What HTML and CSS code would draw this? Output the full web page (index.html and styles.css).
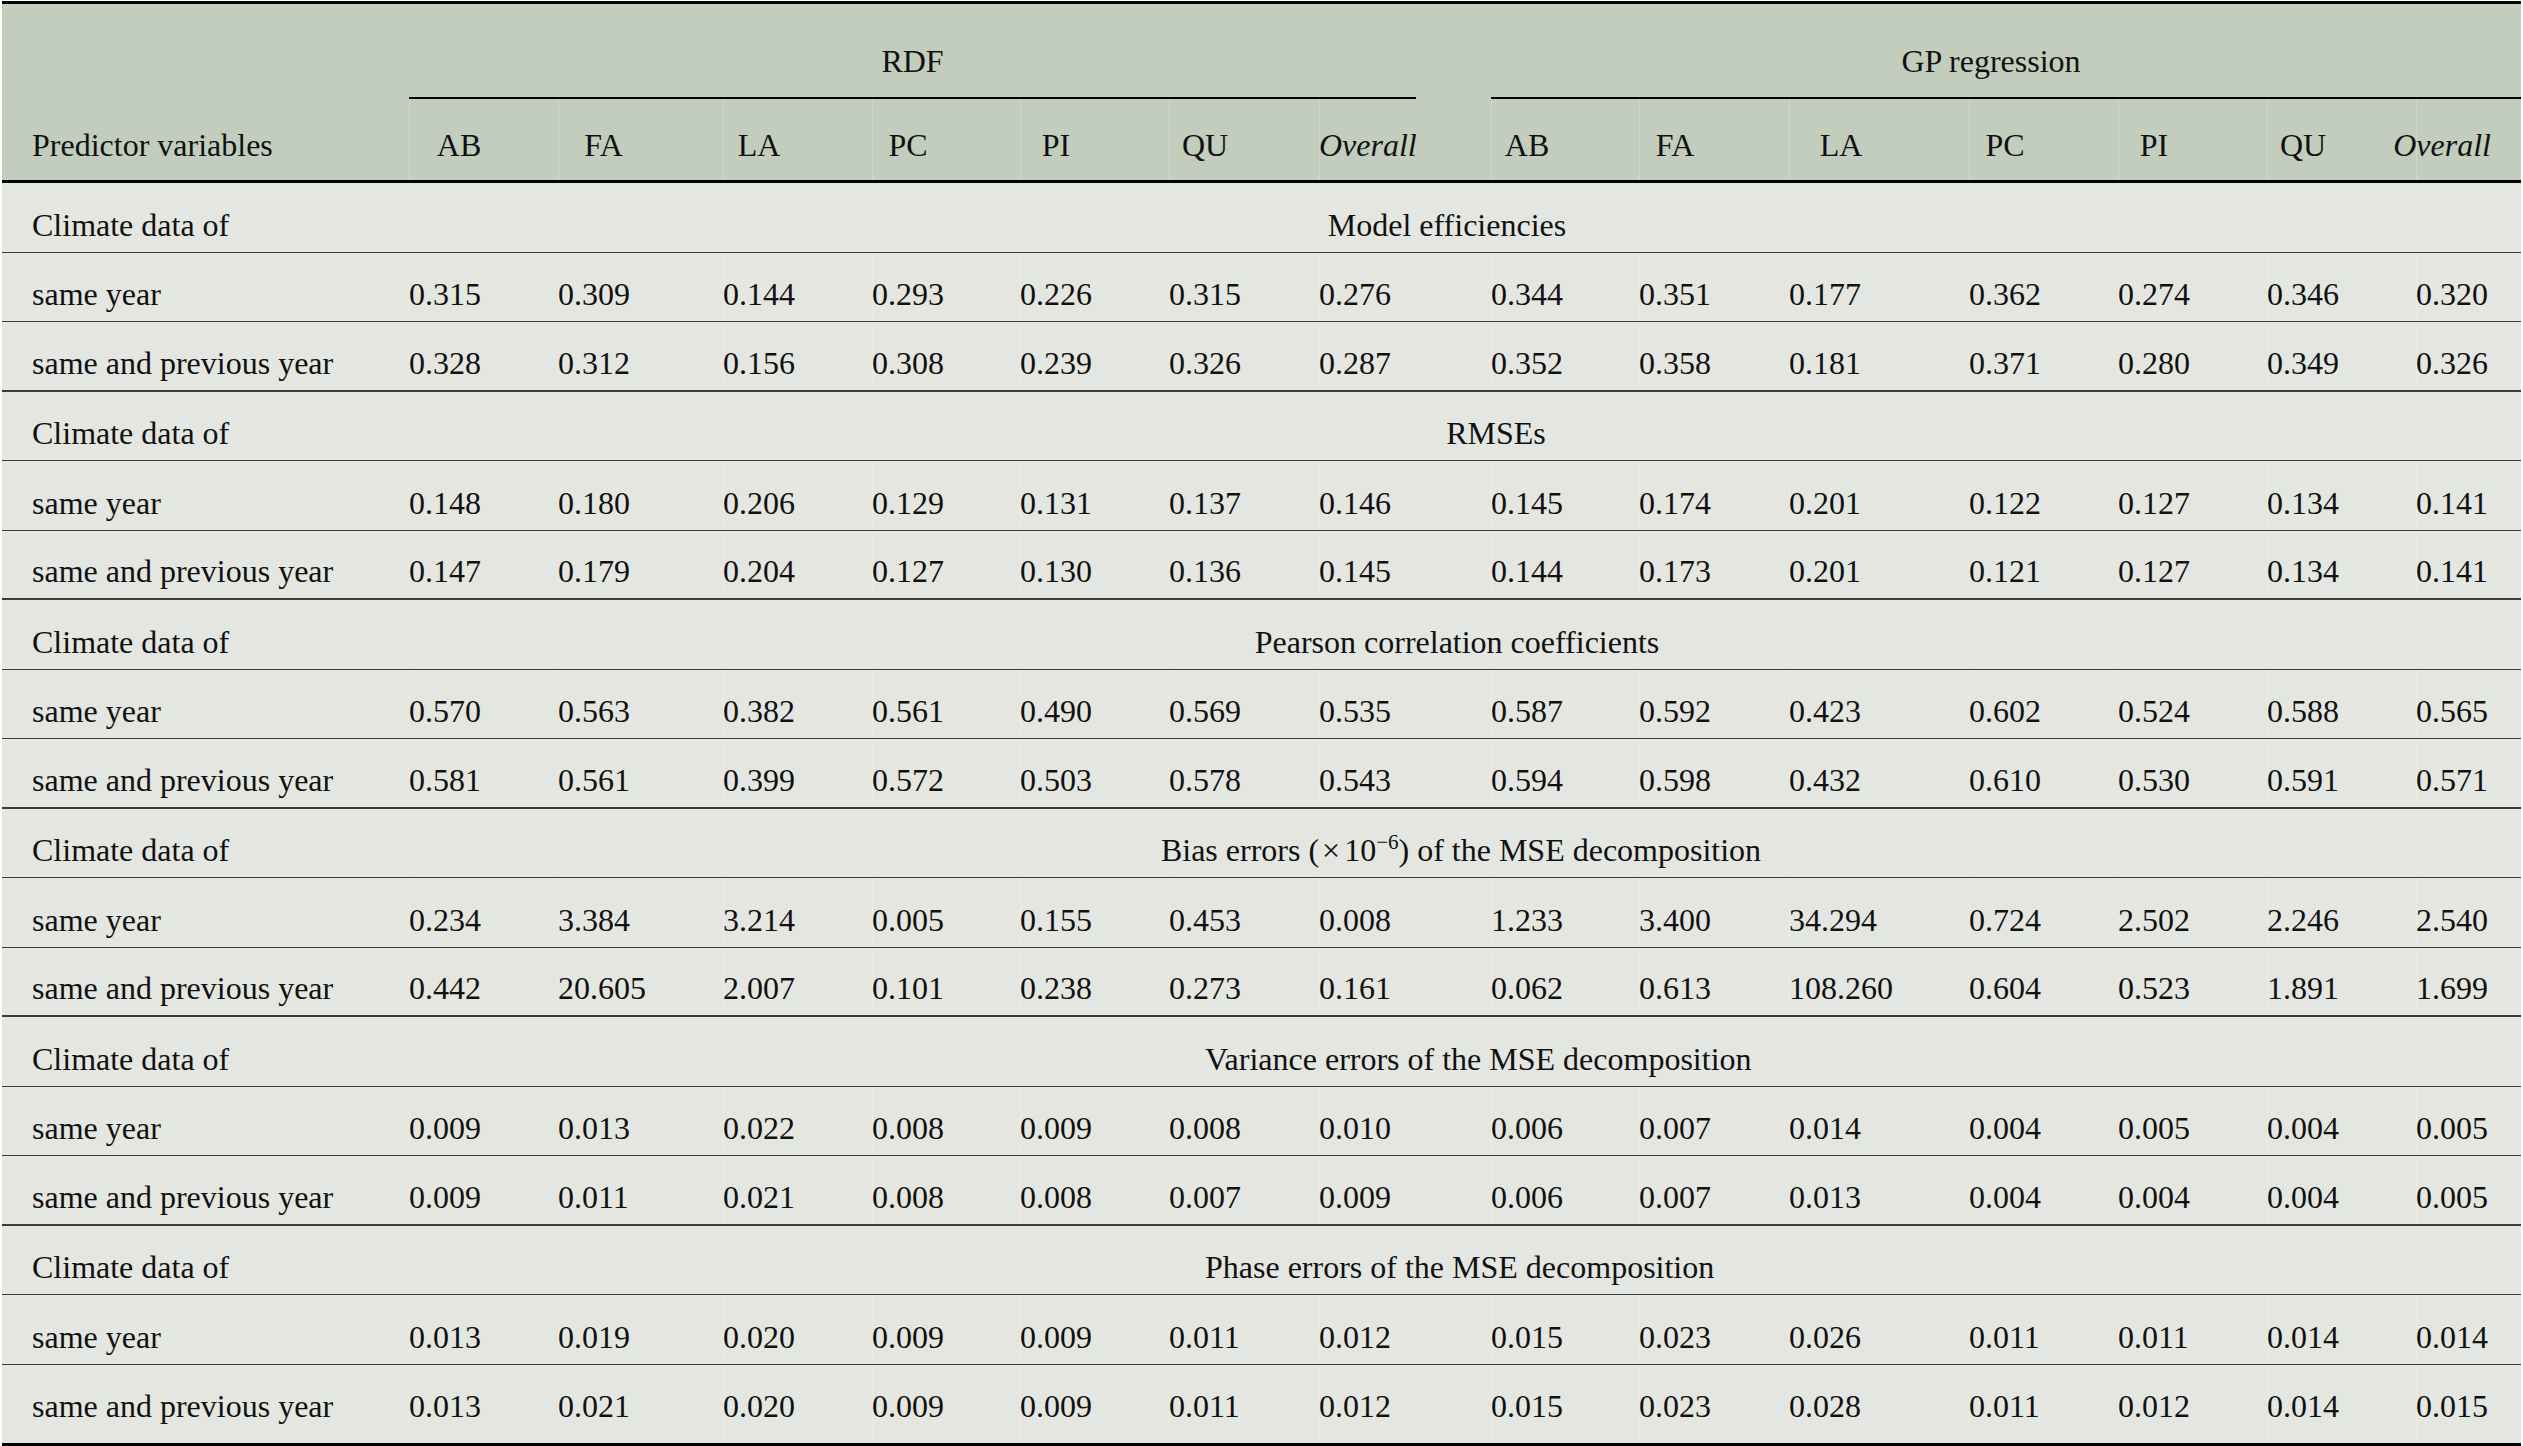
FILE: index.html
```html
<!DOCTYPE html>
<html lang="en">
<head>
<meta charset="utf-8">
<title>Model performance table</title>
<link rel="stylesheet" href="styles.css">
</head>
<body>
<div class="table">
  <div class="hdr-top">
    <div class="lab"></div>
    <div class="grp grp-rdf">RDF</div>
    <div class="grp grp-gp">GP regression</div>
  </div>
  <div class="hdr-cols">
    <div class="lab">Predictor variables</div>
    <div class="c"><span class="hb n14">AB</span></div>
    <div class="c"><span class="hb n10">FA</span></div>
    <div class="c"><span class="hb">LA</span></div>
    <div class="c"><span class="hb">PC</span></div>
    <div class="c"><span class="hb">PI</span></div>
    <div class="c"><span class="hb">QU</span></div>
    <div class="c"><span class="hb hl it">Overall</span></div>
    <div class="c"><span class="hb">AB</span></div>
    <div class="c"><span class="hb">FA</span></div>
    <div class="c"><span class="hb n16">LA</span></div>
    <div class="c"><span class="hb">PC</span></div>
    <div class="c"><span class="hb">PI</span></div>
    <div class="c"><span class="hb">QU</span></div>
    <div class="c"><span class="hb hr it">Overall</span></div>
  </div>

  <div class="row">
    <div class="lab">Climate data of</div>
    <div class="title t-model"><span>Model efficiencies</span></div>
  </div>
  <div class="row">
    <div class="lab">same year</div>
    <div class="c">0.315</div><div class="c">0.309</div><div class="c">0.144</div><div class="c">0.293</div><div class="c">0.226</div><div class="c">0.315</div><div class="c">0.276</div>
    <div class="c">0.344</div><div class="c">0.351</div><div class="c">0.177</div><div class="c">0.362</div><div class="c">0.274</div><div class="c">0.346</div><div class="c">0.320</div>
  </div>
  <div class="row sep">
    <div class="lab">same and previous year</div>
    <div class="c">0.328</div><div class="c">0.312</div><div class="c">0.156</div><div class="c">0.308</div><div class="c">0.239</div><div class="c">0.326</div><div class="c">0.287</div>
    <div class="c">0.352</div><div class="c">0.358</div><div class="c">0.181</div><div class="c">0.371</div><div class="c">0.280</div><div class="c">0.349</div><div class="c">0.326</div>
  </div>

  <div class="row">
    <div class="lab">Climate data of</div>
    <div class="title t-rmse"><span>RMSEs</span></div>
  </div>
  <div class="row">
    <div class="lab">same year</div>
    <div class="c">0.148</div><div class="c">0.180</div><div class="c">0.206</div><div class="c">0.129</div><div class="c">0.131</div><div class="c">0.137</div><div class="c">0.146</div>
    <div class="c">0.145</div><div class="c">0.174</div><div class="c">0.201</div><div class="c">0.122</div><div class="c">0.127</div><div class="c">0.134</div><div class="c">0.141</div>
  </div>
  <div class="row sep">
    <div class="lab">same and previous year</div>
    <div class="c">0.147</div><div class="c">0.179</div><div class="c">0.204</div><div class="c">0.127</div><div class="c">0.130</div><div class="c">0.136</div><div class="c">0.145</div>
    <div class="c">0.144</div><div class="c">0.173</div><div class="c">0.201</div><div class="c">0.121</div><div class="c">0.127</div><div class="c">0.134</div><div class="c">0.141</div>
  </div>

  <div class="row">
    <div class="lab">Climate data of</div>
    <div class="title t-pearson"><span>Pearson correlation coefficients</span></div>
  </div>
  <div class="row">
    <div class="lab">same year</div>
    <div class="c">0.570</div><div class="c">0.563</div><div class="c">0.382</div><div class="c">0.561</div><div class="c">0.490</div><div class="c">0.569</div><div class="c">0.535</div>
    <div class="c">0.587</div><div class="c">0.592</div><div class="c">0.423</div><div class="c">0.602</div><div class="c">0.524</div><div class="c">0.588</div><div class="c">0.565</div>
  </div>
  <div class="row sep">
    <div class="lab">same and previous year</div>
    <div class="c">0.581</div><div class="c">0.561</div><div class="c">0.399</div><div class="c">0.572</div><div class="c">0.503</div><div class="c">0.578</div><div class="c">0.543</div>
    <div class="c">0.594</div><div class="c">0.598</div><div class="c">0.432</div><div class="c">0.610</div><div class="c">0.530</div><div class="c">0.591</div><div class="c">0.571</div>
  </div>

  <div class="row">
    <div class="lab">Climate data of</div>
    <div class="title t-bias"><span>Bias errors (<span class="times">×</span>10<sup>−6</sup>) of the MSE decomposition</span></div>
  </div>
  <div class="row">
    <div class="lab">same year</div>
    <div class="c">0.234</div><div class="c">3.384</div><div class="c">3.214</div><div class="c">0.005</div><div class="c">0.155</div><div class="c">0.453</div><div class="c">0.008</div>
    <div class="c">1.233</div><div class="c">3.400</div><div class="c">34.294</div><div class="c">0.724</div><div class="c">2.502</div><div class="c">2.246</div><div class="c">2.540</div>
  </div>
  <div class="row sep">
    <div class="lab">same and previous year</div>
    <div class="c">0.442</div><div class="c">20.605</div><div class="c">2.007</div><div class="c">0.101</div><div class="c">0.238</div><div class="c">0.273</div><div class="c">0.161</div>
    <div class="c">0.062</div><div class="c">0.613</div><div class="c">108.260</div><div class="c">0.604</div><div class="c">0.523</div><div class="c">1.891</div><div class="c">1.699</div>
  </div>

  <div class="row">
    <div class="lab">Climate data of</div>
    <div class="title t-left"><span>Variance errors of the MSE decomposition</span></div>
  </div>
  <div class="row">
    <div class="lab">same year</div>
    <div class="c">0.009</div><div class="c">0.013</div><div class="c">0.022</div><div class="c">0.008</div><div class="c">0.009</div><div class="c">0.008</div><div class="c">0.010</div>
    <div class="c">0.006</div><div class="c">0.007</div><div class="c">0.014</div><div class="c">0.004</div><div class="c">0.005</div><div class="c">0.004</div><div class="c">0.005</div>
  </div>
  <div class="row sep">
    <div class="lab">same and previous year</div>
    <div class="c">0.009</div><div class="c">0.011</div><div class="c">0.021</div><div class="c">0.008</div><div class="c">0.008</div><div class="c">0.007</div><div class="c">0.009</div>
    <div class="c">0.006</div><div class="c">0.007</div><div class="c">0.013</div><div class="c">0.004</div><div class="c">0.004</div><div class="c">0.004</div><div class="c">0.005</div>
  </div>

  <div class="row">
    <div class="lab">Climate data of</div>
    <div class="title t-left"><span>Phase errors of the MSE decomposition</span></div>
  </div>
  <div class="row">
    <div class="lab">same year</div>
    <div class="c">0.013</div><div class="c">0.019</div><div class="c">0.020</div><div class="c">0.009</div><div class="c">0.009</div><div class="c">0.011</div><div class="c">0.012</div>
    <div class="c">0.015</div><div class="c">0.023</div><div class="c">0.026</div><div class="c">0.011</div><div class="c">0.011</div><div class="c">0.014</div><div class="c">0.014</div>
  </div>
  <div class="row last">
    <div class="lab">same and previous year</div>
    <div class="c">0.013</div><div class="c">0.021</div><div class="c">0.020</div><div class="c">0.009</div><div class="c">0.009</div><div class="c">0.011</div><div class="c">0.012</div>
    <div class="c">0.015</div><div class="c">0.023</div><div class="c">0.028</div><div class="c">0.011</div><div class="c">0.012</div><div class="c">0.014</div><div class="c">0.015</div>
  </div>
</div>
</body>
</html>
```

FILE: styles.css
```css
html, body {
  margin: 0;
  padding: 0;
  background: #ffffff;
}

.table {
  margin: 1px 0 0 2px;
  width: 2519px;
  border-top: 3px solid #000;
  font-family: "Liberation Serif", "Times New Roman", serif;
  font-size: 32px;
  line-height: 32px;
  color: #111;
}

.hdr-top,
.hdr-cols,
.row {
  display: grid;
  grid-template-columns: 407px 149px 165px 149px 148px 149px 150px 172px 148px 150px 180px 149px 149px 149px 105px;
  box-sizing: border-box;
}

.hdr-top,
.hdr-cols {
  background: #c2cdbe;
}

.hdr-top {
  height: 95px;
}

.hdr-cols {
  height: 84px;
  border-bottom: 3px solid #000;
}

.row {
  height: 69.5px;
  background: #e4e6e1;
  border-bottom: 1px solid #3a3a3a;
}

.row.sep {
  border-bottom: 2px solid #3b3d39;
}

.row.last {
  height: 81px;
  border-bottom: 3px solid #000;
}

.lab,
.c,
.title,
.grp {
  display: flex;
  align-items: flex-end;
  white-space: nowrap;
  box-sizing: border-box;
}

.lab {
  padding-left: 30px;
}

.c {
  box-shadow: inset 1px 0 0 rgba(255, 255, 255, 0.22);
}

.hdr-top .lab,
.grp {
  padding-bottom: 20px;
}

.hdr-cols .lab,
.hdr-cols .c {
  padding-bottom: 19px;
}

.row .lab,
.row .c,
.row .title {
  padding-bottom: 11px;
}

.row.last .lab,
.row.last .c {
  padding-bottom: 21px;
}

.grp {
  justify-content: center;
  border-bottom: 2px solid #000;
}

.grp-rdf {
  grid-column: 2 / 9;
  margin-right: 75px;
}

.grp-gp {
  grid-column: 9 / 16;
  padding-right: 30px;
}

.hb {
  display: flex;
  justify-content: center;
  box-sizing: border-box;
  width: 72px;
}

.hb.hl {
  justify-content: flex-start;
}

.hb.hr {
  justify-content: flex-end;
  margin-left: 3px;
}

.n10 { padding-left: 19px; }
.n14 { padding-left: 28px; }
.n16 { padding-left: 32px; }

.it {
  font-style: italic;
}

.title {
  grid-column: 2 / 16;
  justify-content: center;
}

.title.t-model { padding-right: 36px; }
.title.t-rmse { padding-left: 62px; }
.title.t-pearson { padding-right: 16px; }
.title.t-bias { padding-right: 8px; }
.title.t-left {
  justify-content: flex-start;
  padding-left: 796px;
}

.times {
  margin: 0 4px 0 3px;
}

sup {
  font-size: 21px;
  line-height: 0;
  vertical-align: 12px;
}
```
